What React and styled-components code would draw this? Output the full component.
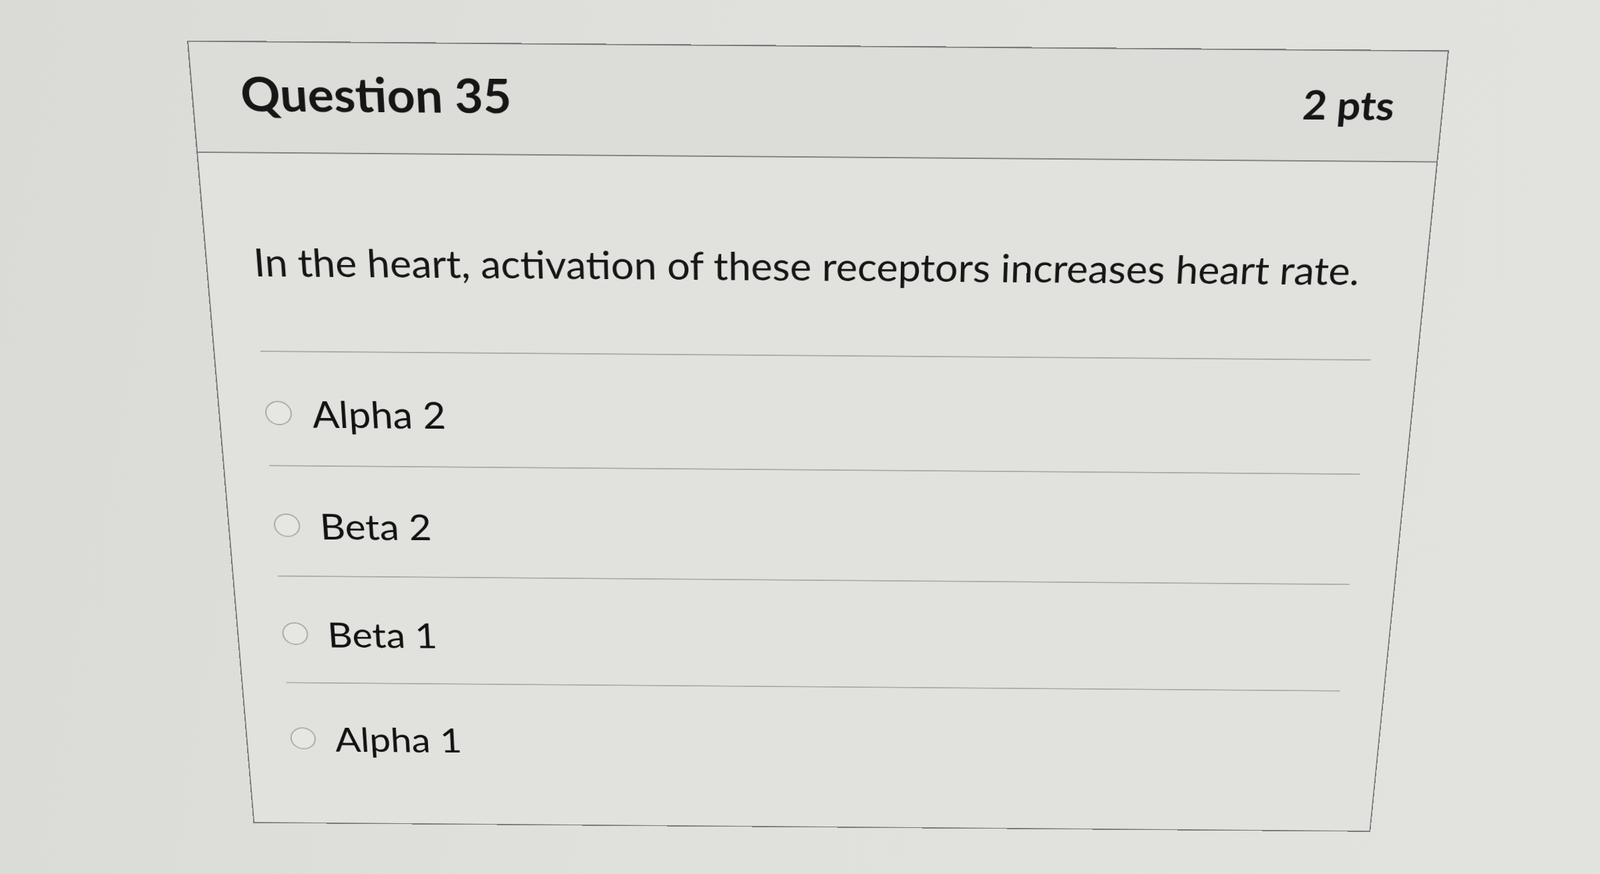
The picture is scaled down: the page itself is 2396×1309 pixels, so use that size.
import styled, { createGlobalStyle } from "styled-components";

const GlobalStyle = createGlobalStyle`
html, body {
  margin:0;
  padding:0;
  overflow:hidden;
  background:#dfdfdb;
}
body {
  font-family: Lato, "Liberation Sans", sans-serif;
  color:#1b1b1b;
}
`

const Page = styled.div`
width:100vw;
height:100vh;
overflow:hidden;
background:linear-gradient(100deg, #dadad6 0%, #e0e0dc 45%, #e2e2de 100%);
padding-top:68px;
box-sizing:border-box;
`

const Card = styled.div`
width:1890px;
margin-left:280px;
box-sizing:border-box;
border:2px solid #777a7c;
background:#e1e1dd;
transform-origin:50% 0;
transform:rotate(0.45deg) perspective(2731px) rotateX(-15deg);
`

const Header = styled.div`
height:175px;
box-sizing:border-box;
padding:43px 72px 0 72px;
display:flex;
align-items:baseline;
justify-content:space-between;
background:#dcdcd8;
border-bottom:2px solid #7d8082;
`

const Title = styled.h2`
margin:0;
font-size:${props => props.size || "74px"};
line-height:1;
font-weight:700;
color:#161616;
`

const Body = styled.div`
padding:145px 72px 73px 72px;
`

const QuestionText = styled.p`
margin:0 0 118px 0;
font-size:63px;
line-height:1;
font-weight:400;
color:#161616;
white-space:nowrap;
`

const AnswerRow = styled.label`
height:198px;
box-sizing:border-box;
padding-top:14px;
border-top:2px solid #a8a9a7;
display:flex;
align-items:center;
gap:32px;
cursor:pointer;
`

const Radio = styled.span`
width:42px;
height:42px;
box-sizing:border-box;
border-radius:50%;
border:2px solid #a4a6a6;
background:#e6e6e2;
flex-shrink:0;
`

const AnswerText = styled.span`
font-size:63px;
line-height:1;
color:#121212;
`

const answers = ["Alpha 2", "Beta 2", "Beta 1", "Alpha 1"];

export default function App() {
  return (
    <Page>
      <GlobalStyle />
      <Card>
        <Header>
          <Title>Question 35</Title>
          <Title size={"63px"}>2 pts</Title>
        </Header>
        <Body>
          <QuestionText>In the heart, activation of these receptors increases heart rate.</QuestionText>
          {answers.map(a => (
            <AnswerRow key={a}>
              <Radio />
              <AnswerText>{a}</AnswerText>
            </AnswerRow>
          ))}
        </Body>
      </Card>
    </Page>
  )
}
